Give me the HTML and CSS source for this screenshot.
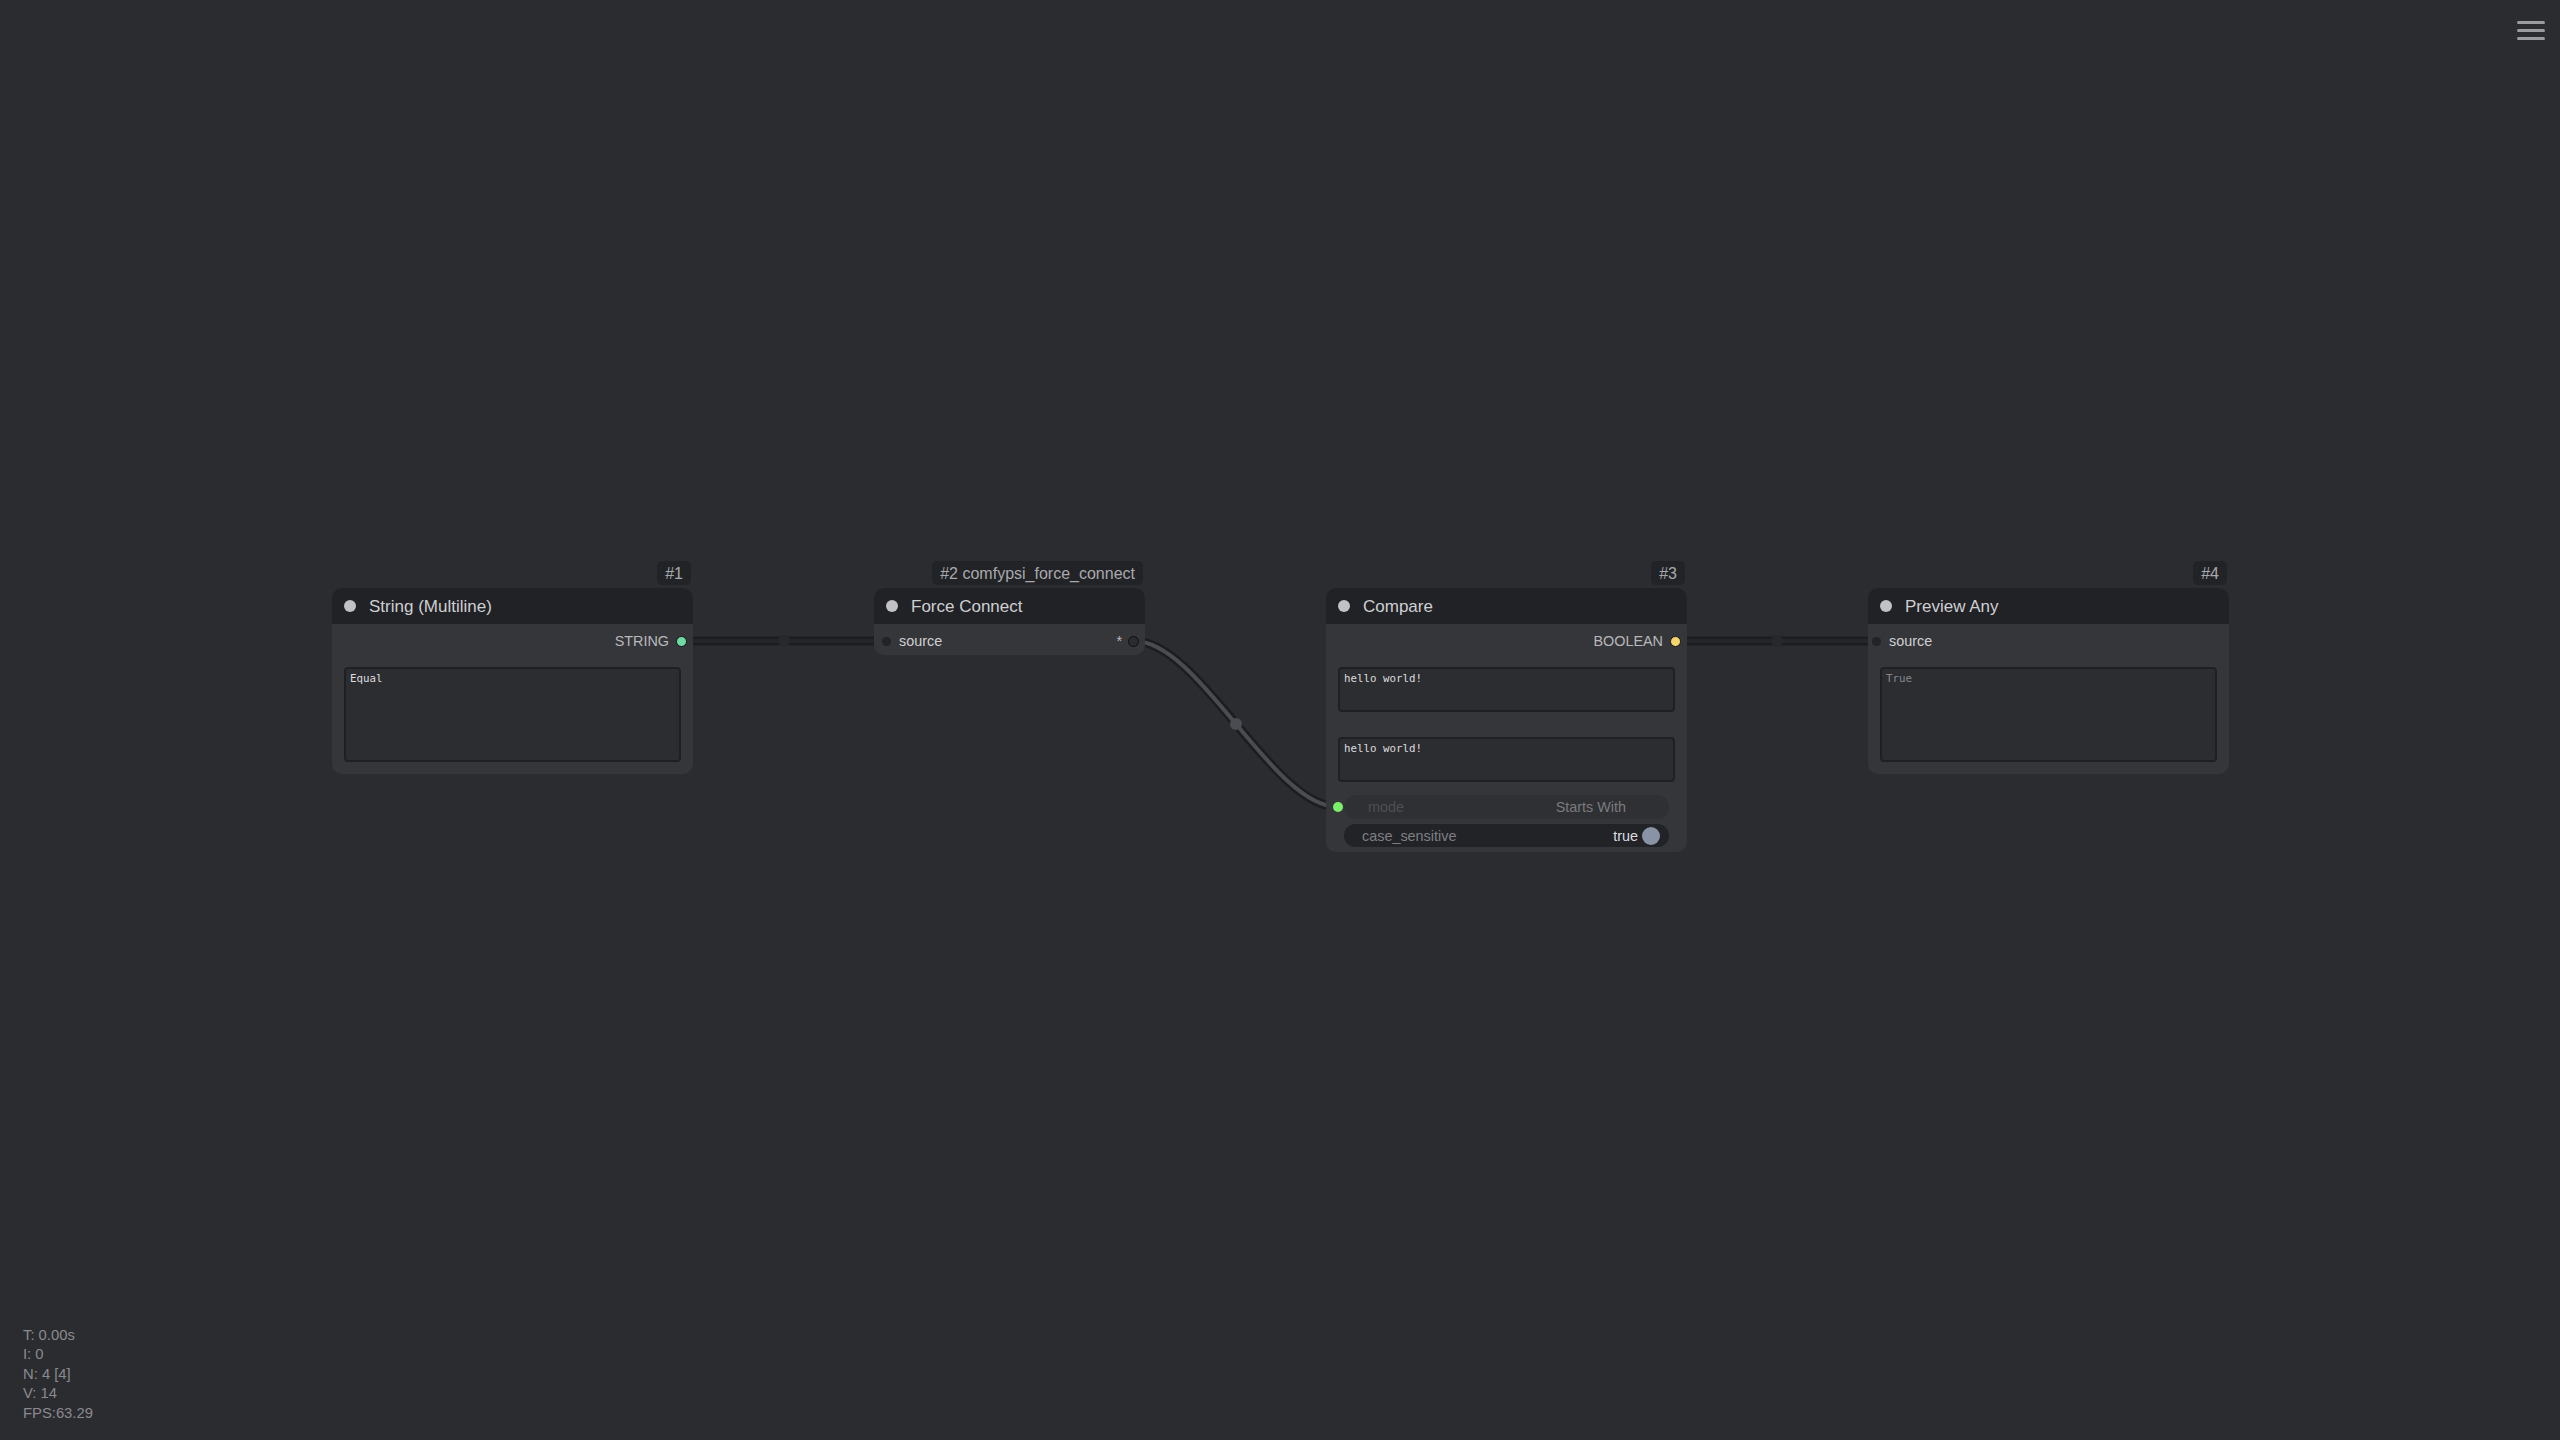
FILE: index.html
```html
<!DOCTYPE html>
<html>
<head>
<meta charset="utf-8">
<link rel="stylesheet" href="styles.css">
</head>
<body>
<div class="canvas">
  <svg class="links" width="2560" height="1440" viewBox="0 0 2560 1440">
    <path class="link-border" d="M682 641 L886 641"/>
    <path class="link-dark" d="M682 641 L886 641"/>
    <circle class="mid-dark" cx="784" cy="641" r="6"/>
    <path class="link-border" d="M1134 641 C1200 641 1272 807 1338 807"/>
    <path class="link-light" d="M1134 641 C1200 641 1272 807 1338 807"/>
    <circle class="mid-light" cx="1236" cy="724" r="6"/>
    <path class="link-border" d="M1676 641 L1879 641"/>
    <path class="link-dark" d="M1676 641 L1879 641"/>
    <circle class="mid-dark" cx="1777" cy="641" r="6"/>
  </svg>

  <div class="node n1">
    <div class="badge">#1</div>
    <div class="title"><span class="tdot"></span><span class="tname">String (Multiline)</span></div>
    <div class="body">
      <div class="slot out"><span class="slabel">STRING</span><span class="sdot green"></span></div>
      <div class="tarea tall"><span class="ttext">Equal</span></div>
    </div>
  </div>

  <div class="node n2">
    <div class="badge">#2 comfypsi_force_connect</div>
    <div class="title"><span class="tdot"></span><span class="tname">Force Connect</span></div>
    <div class="body short">
      <div class="slot both">
        <span class="idot"></span><span class="ilabel">source</span>
        <span class="spacer"></span>
        <span class="slabel star">*</span><span class="sdot hollow"></span>
      </div>
    </div>
  </div>

  <div class="node n3">
    <div class="badge">#3</div>
    <div class="title"><span class="tdot"></span><span class="tname">Compare</span></div>
    <div class="body compact">
      <div class="slot out"><span class="slabel">BOOLEAN</span><span class="sdot yellow"></span></div>
      <div class="tarea small"><span class="ttext">hello world!</span></div>
      <div class="tarea small second"><span class="ttext">hello world!</span></div>
      <div class="widget mode">
        <span class="wdot"></span>
        <span class="wname dim">mode</span>
        <span class="wval dim">Starts With</span>
      </div>
      <div class="widget toggle">
        <span class="wname">case_sensitive</span>
        <span class="wval bright">true</span>
        <span class="knob"></span>
      </div>
    </div>
  </div>

  <div class="node n4">
    <div class="badge">#4</div>
    <div class="title"><span class="tdot"></span><span class="tname">Preview Any</span></div>
    <div class="body">
      <div class="slot in"><span class="idot"></span><span class="ilabel">source</span></div>
      <div class="tarea tall"><span class="ttext muted">True</span></div>
    </div>
  </div>

  <div class="menu">
    <span></span><span></span><span></span>
  </div>

  <div class="stats">
    <div>T: 0.00s</div>
    <div>I: 0</div>
    <div>N: 4 [4]</div>
    <div>V: 14</div>
    <div>FPS:63.29</div>
  </div>
</div>
</body>
</html>
```

FILE: styles.css
```css
* { box-sizing: border-box; }
html, body {
  margin: 0;
  padding: 0;
  width: 2560px;
  height: 1440px;
  overflow: hidden;
  background: #2b2c30;
  font-family: "Liberation Sans", Arial, sans-serif;
}
.canvas {
  position: relative;
  width: 2560px;
  height: 1440px;
  background: #2b2c30;
}
.links {
  position: absolute;
  left: 0;
  top: 0;
}
.link-border { fill: none; stroke: #1c1d20; stroke-width: 9; }
.link-dark { fill: none; stroke: #242529; stroke-width: 4; }
.link-light { fill: none; stroke: #4b4c51; stroke-width: 4; }
.mid-dark { fill: #27282c; }
.mid-light { fill: #4b4c51; }

.node {
  position: absolute;
  top: 588px;
  width: 361px;
  background: #353639;
  border-radius: 10px;
}
.n1 { left: 332px; }
.n2 { left: 874px; width: 271px; }
.n3 { left: 1326px; }
.n4 { left: 1868px; }

.badge {
  position: absolute;
  right: 2px;
  top: -27px;
  height: 24px;
  padding: 0 8px;
  background: #222327;
  border-radius: 5px;
  color: #a9a9ad;
  font-size: 16px;
  line-height: 25px;
  white-space: nowrap;
}

.title {
  display: flex;
  align-items: center;
  height: 36px;
  padding-left: 12px;
  background: #212226;
  border-radius: 10px 10px 0 0;
}
.tdot {
  width: 12px;
  height: 12px;
  border-radius: 50%;
  background: #c2c2c6;
  flex: none;
}
.tname {
  margin-left: 13px;
  color: #cfcfd2;
  font-size: 17px;
  line-height: 20px;
  padding-top: 1px;
}

.body {
  display: flex;
  flex-direction: column;
  padding: 5px 12px 12px 12px;
}
.body.short { padding: 5px 6px 2px 8px; }
.body.compact { padding-bottom: 5px; }

.slot {
  display: flex;
  align-items: center;
  height: 24px;
  font-size: 14.4px;
}
.slot.out { justify-content: flex-end; margin-right: -6px; }
.slot.in { margin-left: -8px; }
.slabel { color: #b8b8bc; }
.slabel.star { color: #b8b8bc; margin-right: 6px; }
.sdot {
  width: 11px;
  height: 11px;
  border-radius: 50%;
  margin-left: 7px;
  border: 1.5px solid #141416;
  flex: none;
}
.sdot.green { background: #6fdba3; }
.sdot.yellow { background: #f4d56c; }
.sdot.hollow { background: #2a2b2e; border: 1.5px solid #0e0e10; margin-left: 0; }
.idot {
  width: 9px;
  height: 9px;
  border-radius: 50%;
  background: #222326;
  flex: none;
}
.ilabel {
  margin-left: 8px;
  color: #cfcfd2;
}
.spacer { flex: 1; }

.tarea {
  margin-top: 14px;
  background: #2c2d31;
  border: 2px solid #1f2023;
  border-radius: 4px;
  padding: 3px 4px;
  font-family: "DejaVu Sans Mono", "Liberation Mono", monospace;
  font-size: 10.8px;
  line-height: 13px;
  color: #dcdcdf;
}
.tarea.tall { height: 95px; }
.tarea.small { height: 45px; }
.tarea.second { margin-top: 25px; }
.ttext.muted { color: #85868a; }

.widget {
  position: relative;
  display: flex;
  align-items: center;
  height: 24px;
  margin: 0 6px;
  border-radius: 12px;
  font-size: 14.4px;
}
.widget.mode {
  margin-top: 13px;
  background: #2f3034;
  padding: 0 43px 0 24px;
}
.widget.toggle {
  margin-top: 5px;
  height: 23px;
  background: #222327;
  padding: 0 9px 0 18px;
}
.wdot {
  position: absolute;
  left: -11px;
  top: 7px;
  width: 10px;
  height: 10px;
  border-radius: 50%;
  background: #7cf06b;
}
.wname { flex: 1; color: #7e7f83; }
.wname.dim { color: #4e4f53; }
.wval.dim { color: #7a7b7f; }
.wval.bright { color: #dcdce0; }
.knob {
  width: 18px;
  height: 18px;
  border-radius: 50%;
  background: #8a93a5;
  margin-left: 4px;
  flex: none;
}

.menu {
  position: absolute;
  right: 15px;
  top: 21px;
  width: 28px;
  display: flex;
  flex-direction: column;
  gap: 5.5px;
}
.menu span {
  display: block;
  height: 2.5px;
  border-radius: 2px;
  background: #9c9ca0;
}

.stats {
  position: absolute;
  left: 23px;
  top: 1326px;
  color: #8a8a8e;
  font-size: 14.8px;
  line-height: 19.4px;
}
```
